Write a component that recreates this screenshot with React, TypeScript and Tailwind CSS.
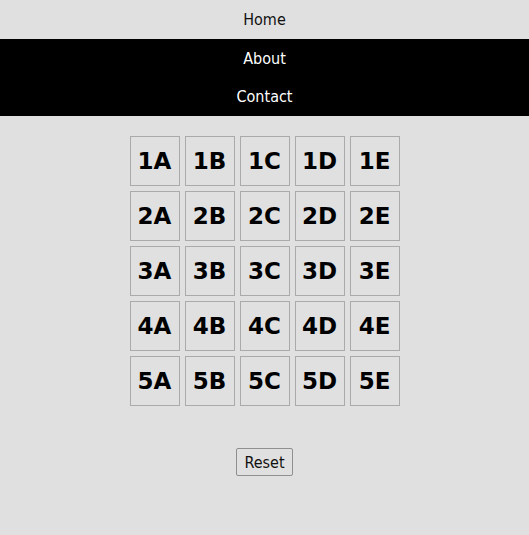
export default function App() {
  const rows = ["1", "2", "3", "4", "5"];
  const cols = ["A", "B", "C", "D", "E"];
  return (
    <div
      className="min-h-screen bg-[#e0e0e0] text-black"
      style={{ fontFamily: '"DejaVu Sans Condensed", "DejaVu Sans", sans-serif' }}
    >
      <nav className="flex flex-col text-[16px]">
        <div className="h-[39px] pt-[1px] flex items-center justify-center text-[#111]">Home</div>
        <div className="h-[38px] pt-[1px] flex items-center justify-center bg-black text-white">About</div>
        <div className="h-[39px] pt-[1px] flex items-center justify-center bg-black text-white">Contact</div>
      </nav>
      <div className="flex justify-center mt-[20px]">
        <div className="grid grid-cols-5 gap-[5px]">
          {rows.map((r) =>
            cols.map((c) => (
              <div
                key={r + c}
                className="w-[50px] h-[50px] border border-[#aaaaaa] flex items-center justify-center text-[23px] font-bold font-['DejaVu_Sans',sans-serif]"
              >
                {r + c}
              </div>
            ))
          )}
        </div>
      </div>
      <div className="flex justify-center mt-[42px]">
        <button className="w-[57px] h-[28px] pt-[1px] border border-[#8f8f8f] rounded-[2px] bg-[#e0e0e0] text-[16px] text-[#111] flex items-center justify-center">
          Reset
        </button>
      </div>
    </div>
  );
}
